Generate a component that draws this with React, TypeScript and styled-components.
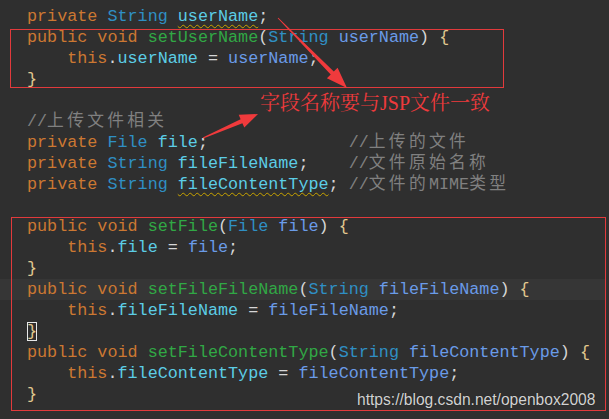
import React from "react";
import styled, { createGlobalStyle } from "styled-components";

const Global = createGlobalStyle`
  html, body { margin: 0; padding: 0; background: #2f2f2f; }
  #root { width: 609px; height: 419px; }
`;

type Kind = "kw" | "type" | "field" | "param" | "method" | "punc" | "brace" | "comment" | "plain";

const colors: Record<Kind, string> = {
  kw: "#cc7832",
  type: "#2f8fc4",
  field: "#5ccde6",
  param: "#6a9be8",
  method: "#31a845",
  punc: "#d6d6d6",
  brace: "#e2c98f",
  comment: "#808080",
  plain: "#d6d6d6",
};

const Screen = styled.div`
  position: relative;
  width: 609px;
  height: 419px;
  overflow: hidden;
  background: #2f2f2f;
`;

const Code = styled.div`
  display: flex;
  flex-direction: column;
  padding-top: 6px;
  font-family: "Liberation Mono", "Noto Sans CJK SC", monospace;
  font-size: 16.75px;
  line-height: 21px;
  white-space: pre;
`;

const Line = styled.div<{ $active?: boolean }>`
  height: 21px;
  padding-left: 27px;
  margin-right: 4px;
  background: ${(p) => (p.$active ? "#363636" : "transparent")};
`;

const Tok = styled.span<{ $k: Kind; $wavy?: boolean; $boxed?: boolean }>`
  color: ${(p) => colors[p.$k]};
  ${(p) =>
    p.$wavy
      ? `text-decoration: underline wavy #c9a400; text-decoration-thickness: 1px; text-underline-offset: 3px;`
      : ""}
  ${(p) => (p.$boxed ? `outline: 1px solid #e8e8e8; outline-offset: -1px;` : "")}
`;

const Cjk = styled.span`
  letter-spacing: 3.3px;
`;

const Box = styled.div<{ $l: number; $t: number; $w: number; $h: number }>`
  position: absolute;
  left: ${(p) => p.$l}px;
  top: ${(p) => p.$t}px;
  width: ${(p) => p.$w}px;
  height: ${(p) => p.$h}px;
  border: 1px solid #e23a3c;
  box-sizing: border-box;
  pointer-events: none;
`;

const Note = styled.div`
  position: absolute;
  left: 260px;
  top: 91px;
  font-family: "Liberation Serif", "Noto Serif CJK SC", "Noto Sans CJK SC", serif;
  font-size: 20px;
  line-height: 24px;
  color: #ee3a3c;
  white-space: nowrap;
`;

const Watermark = styled.div`
  position: absolute;
  left: 357px;
  top: 390px;
  font-family: "Liberation Sans", Arial, sans-serif;
  font-size: 15.6px;
  line-height: 20px;
  color: #d2d2d2;
  text-shadow: 0 0 1px rgba(0, 0, 0, 0.5);
  white-space: nowrap;
`;

const Arrows = styled.svg`
  position: absolute;
  left: 0;
  top: 0;
  pointer-events: none;
`;

type T = [Kind, string, ("wavy" | "boxed" | "cjk")?];

const S = (n: number): T => ["plain", " ".repeat(n)];

const lines: T[][] = [
  [["kw", "private "], ["type", "String "], ["field", "userName", "wavy"], ["punc", ";"]],
  [["kw", "public void "], ["method", "setUserName"], ["punc", "("], ["type", "String "], ["param", "userName"], ["punc", ") "], ["brace", "{"]],
  [S(4), ["kw", "this"], ["punc", "."], ["field", "userName"], ["punc", " = "], ["param", "userName"], ["punc", ";"]],
  [["brace", "}"]],
  [],
  [["comment", "//"], ["comment", "上传文件相关", "cjk"]],
  [["kw", "private "], ["type", "File "], ["field", "file"], ["punc", ";"], S(14), ["comment", "//"], ["comment", "上传的文件", "cjk"]],
  [["kw", "private "], ["type", "String "], ["field", "fileFileName"], ["punc", ";"], S(4), ["comment", "//"], ["comment", "文件原始名称", "cjk"]],
  [["kw", "private "], ["type", "String "], ["field", "fileContentType", "wavy"], ["punc", ";"], S(1), ["comment", "//"], ["comment", "文件的", "cjk"], ["comment", "MIME"], ["comment", "类型", "cjk"]],
  [],
  [["kw", "public void "], ["method", "setFile"], ["punc", "("], ["type", "File "], ["param", "file"], ["punc", ") "], ["brace", "{"]],
  [S(4), ["kw", "this"], ["punc", "."], ["field", "file"], ["punc", " = "], ["param", "file"], ["punc", ";"]],
  [["brace", "}"]],
  [["kw", "public void "], ["method", "setFileFileName"], ["punc", "("], ["type", "String "], ["param", "fileFileName"], ["punc", ") "], ["brace", "{"]],
  [S(4), ["kw", "this"], ["punc", "."], ["field", "fileFileName"], ["punc", " = "], ["param", "fileFileName"], ["punc", ";"]],
  [["brace", "}", "boxed"]],
  [["kw", "public void "], ["method", "setFileContentType"], ["punc", "("], ["type", "String "], ["param", "fileContentType"], ["punc", ") "], ["brace", "{"]],
  [S(4), ["kw", "this"], ["punc", "."], ["field", "fileContentType"], ["punc", " = "], ["param", "fileContentType"], ["punc", ";"]],
  [["brace", "}"]],
];

function arrow(tail: [number, number], tip: [number, number], headLen: number, headHalf: number, shaftHalf: number, tailHalf: number) {
  const dx = tip[0] - tail[0];
  const dy = tip[1] - tail[1];
  const len = Math.hypot(dx, dy);
  const ux = dx / len;
  const uy = dy / len;
  const nx = -uy;
  const ny = ux;
  const bx = tip[0] - ux * headLen;
  const by = tip[1] - uy * headLen;
  const pts: [number, number][] = [
    [tail[0] + nx * tailHalf, tail[1] + ny * tailHalf],
    [bx + nx * shaftHalf, by + ny * shaftHalf],
    [bx + nx * headHalf, by + ny * headHalf],
    tip,
    [bx - nx * headHalf, by - ny * headHalf],
    [bx - nx * shaftHalf, by - ny * shaftHalf],
    [tail[0] - nx * tailHalf, tail[1] - ny * tailHalf],
  ];
  return pts.map((p) => `${p[0].toFixed(1)},${p[1].toFixed(1)}`).join(" ");
}

export default function App() {
  return (
    <>
      <Global />
      <Screen>
        <Code>
          {lines.map((toks, i) => (
            <Line key={i} $active={i === 13}>
              {toks.map(([k, text, flag], j) =>
                flag === "cjk" ? (
                  <Tok key={j} $k={k}>
                    <Cjk>{text}</Cjk>
                  </Tok>
                ) : (
                  <Tok key={j} $k={k} $wavy={flag === "wavy"} $boxed={flag === "boxed"}>
                    {text}
                  </Tok>
                )
              )}
            </Line>
          ))}
        </Code>
        <Box $l={10} $t={29} $w={494} $h={59} />
        <Box $l={11} $t={217} $w={595} $h={194} />
        <Arrows width={609} height={419} viewBox="0 0 609 419">
          <polygon points={arrow([278, 18], [347, 88], 21, 7.5, 2.2, 0.4)} fill="#f03a3c" />
          <polygon points={arrow([203, 138], [258, 114], 18, 7, 2.2, 0.6)} fill="#f03a3c" />
        </Arrows>
        <Note>字段名称要与JSP文件一致</Note>
        <Watermark>https://blog.csdn.net/openbox2008</Watermark>
      </Screen>
    </>
  );
}
